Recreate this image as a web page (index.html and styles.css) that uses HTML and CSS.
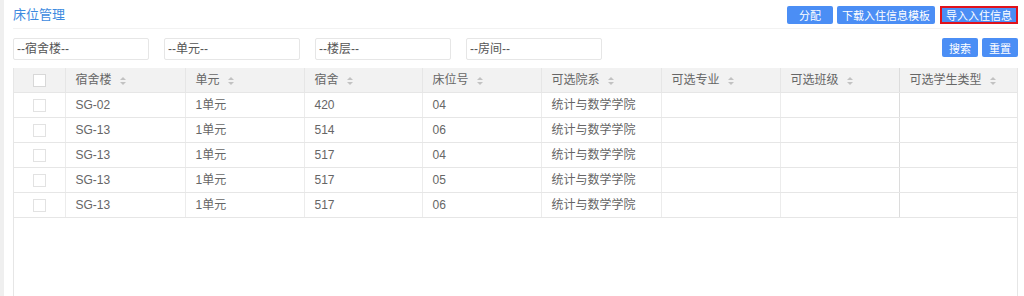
FILE: index.html
```html
<!DOCTYPE html>
<html>
<head>
    <meta charset="utf-8">
    <title>床位管理</title>
    <link rel="stylesheet" href="styles.css">
</head>
<body>
    <div class="page">
        <div class="topbar">
            <span class="title">床位管理</span>
            <div class="actions">
                <button class="btn btn-fixed">分配</button>
                <button class="btn">下载入住信息模板</button>
                <button class="btn btn-marked">导入入住信息</button>
            </div>
        </div>

        <div class="filters">
            <div class="filter-inputs">
                <input type="text" class="filter" placeholder="--宿舍楼--">
                <input type="text" class="filter" placeholder="--单元--">
                <input type="text" class="filter" placeholder="--楼层--">
                <input type="text" class="filter" placeholder="--房间--">
            </div>
            <div class="filter-actions">
                <button class="btn btn-tall">搜索</button>
                <button class="btn btn-tall">重置</button>
            </div>
        </div>

        <div class="table-box">
            <table class="grid">
                <colgroup>
                    <col style="width: 51px">
                    <col style="width: 120px">
                    <col style="width: 119px">
                    <col style="width: 118px">
                    <col style="width: 119px">
                    <col style="width: 120px">
                    <col style="width: 119px">
                    <col style="width: 119px">
                    <col>
                </colgroup>
                <thead>
                    <tr>
                        <th class="check-cell"><span class="checkbox"></span></th>
                        <th>宿舍楼<span class="sort"></span></th>
                        <th>单元<span class="sort"></span></th>
                        <th>宿舍<span class="sort"></span></th>
                        <th>床位号<span class="sort"></span></th>
                        <th>可选院系<span class="sort"></span></th>
                        <th>可选专业<span class="sort"></span></th>
                        <th>可选班级<span class="sort"></span></th>
                        <th class="strong-left">可选学生类型<span class="sort"></span></th>
                    </tr>
                </thead>
                <tbody id="rows"></tbody>
            </table>
        </div>
    </div>

    <script>
        var beds = [
            ['SG-02', '1单元', '420', '04', '统计与数学学院'],
            ['SG-13', '1单元', '514', '06', '统计与数学学院'],
            ['SG-13', '1单元', '517', '04', '统计与数学学院'],
            ['SG-13', '1单元', '517', '05', '统计与数学学院'],
            ['SG-13', '1单元', '517', '06', '统计与数学学院']
        ];

        var tbody = document.getElementById('rows');
        beds.forEach(function(bed) {
            var tr = document.createElement('tr');
            var html = '<td class="check-cell"><span class="checkbox light"></span></td>';
            bed.forEach(function(value) {
                html += '<td>' + value + '</td>';
            });
            html += '<td></td><td></td><td class="strong-left"></td>';
            tr.innerHTML = html;
            tbody.appendChild(tr);
        });
    </script>
</body>
</html>
```

FILE: styles.css
```css
body {
    margin: 0;
    padding: 0;
    background: #efefef;
    font-family: "Liberation Sans", "Noto Sans CJK SC", sans-serif;
    font-size: 12px;
    color: #666;
    height: 296px;
    overflow: hidden;
}

.page {
    margin-left: 4px;
    height: 296px;
    background: white;
    padding: 0 6px 0 9px;
    display: flex;
    flex-direction: column;
}

.topbar {
    height: 28px;
    display: flex;
    align-items: flex-start;
    justify-content: space-between;
    border-bottom: 1px solid #f2f2f2;
}

.title {
    margin-top: 7px;
    font-size: 13px;
    line-height: 16px;
    color: #3d8ae0;
}

.actions {
    display: flex;
    gap: 4px;
    margin-top: 6px;
}

.btn {
    height: 18px;
    padding: 0 5px;
    border: none;
    border-radius: 2px;
    background: #4b8ef5;
    color: white;
    font-family: "Noto Sans CJK SC", sans-serif;
    font-size: 11px;
    line-height: 18px;
    cursor: pointer;
}

.btn-fixed {
    min-width: 46px;
}

.btn-marked {
    border: 2px solid #e0121b;
    border-radius: 0;
    padding: 0 4px;
    line-height: 14px;
    height: 18px;
    margin-left: 1px;
}

.btn-tall {
    height: 19px;
    padding: 0 7px;
}

.filters {
    display: flex;
    justify-content: space-between;
    margin-top: 9px;
}

.filter-inputs {
    display: flex;
    gap: 15px;
}

.filter {
    width: 136px;
    height: 22px;
    box-sizing: border-box;
    padding: 0 3px;
    border: 1px solid #e6e6e6;
    border-radius: 2px;
    font-family: "Liberation Sans", "Noto Sans CJK SC", sans-serif;
    font-size: 12px;
    line-height: 16px;
    color: #555;
    outline: none;
}

.filter::placeholder {
    color: #555;
}

.filter-actions {
    display: flex;
    gap: 4px;
}

.table-box {
    margin-top: 8px;
    flex: 1;
    border-left: 1px solid #e6e6e6;
    border-right: 1px solid #e6e6e6;
}

.grid {
    width: 100%;
    border-collapse: collapse;
    table-layout: fixed;
}

.grid th,
.grid td {
    height: 24px;
    padding: 0 10px;
    text-align: left;
    font-weight: normal;
    line-height: 14px;
    border-bottom: 1px solid #e6e6e6;
    border-left: 1px solid #ececec;
    white-space: nowrap;
}

.grid th {
    background: #f2f2f2;
    border-left-color: #e6e6e6;
}

.grid th:first-child,
.grid td:first-child {
    border-left: none;
}

.grid .strong-left {
    border-left-color: #dcdcdc;
}

.check-cell {
    text-align: center !important;
    padding: 0 !important;
}

.checkbox {
    display: inline-block;
    width: 11px;
    height: 11px;
    border: 1px solid #d8d8d8;
    background: white;
    vertical-align: middle;
}

.checkbox.light {
    border-color: #e2e2e2;
}

.sort {
    display: inline-block;
    position: relative;
    width: 6px;
    height: 8px;
    margin-left: 8px;
    vertical-align: middle;
}

.sort::before,
.sort::after {
    content: "";
    position: absolute;
    left: 0;
    border-left: 3px solid transparent;
    border-right: 3px solid transparent;
}

.sort::before {
    top: 0;
    border-bottom: 3px solid #c2c2c2;
}

.sort::after {
    bottom: 0;
    border-top: 3px solid #c2c2c2;
}
```
